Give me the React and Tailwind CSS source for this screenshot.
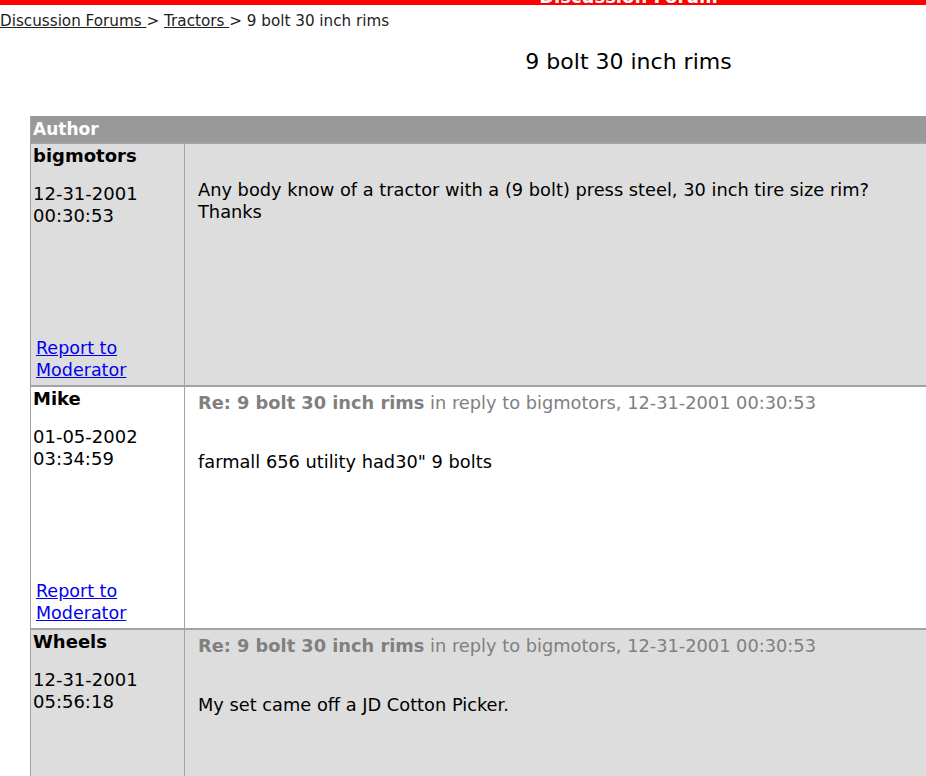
import React from 'react';

const posts = [
  {
    author: 'bigmotors',
    date: '12-31-2001',
    time: '00:30:53',
    body: ['Any body know of a tractor with a (9 bolt) press steel, 30 inch tire size rim?', 'Thanks'],
    bg: 'bg-[#dddddd]',
  },
  {
    author: 'Mike',
    date: '01-05-2002',
    time: '03:34:59',
    reply: true,
    body: ['farmall 656 utility had30" 9 bolts'],
    bg: 'bg-white',
  },
  {
    author: 'Wheels',
    date: '12-31-2001',
    time: '05:56:18',
    reply: true,
    body: ['My set came off a JD Cotton Picker.'],
    bg: 'bg-[#dddddd]',
  },
];

function PostRow({ post }) {
  return (
    <div className={`flex h-[243px] border-t-2 border-[#a3a3a3] ${post.bg}`}>
      <div className="w-[154px] shrink-0 flex flex-col justify-between border-r border-[#a3a3a3] pl-[2px] pt-[1px] pb-[4px] font-['DejaVu_Sans',sans-serif] text-[18px] leading-[22px] text-black">
        <div>
          <div className="font-bold">{post.author}</div>
          <div className="mt-[16px]">
            {post.date}
            <br />
            {post.time}
          </div>
        </div>
        <a href="#" className="pl-[3px] text-[17.5px] text-[#0000ee] underline">
          Report to
          <br />
          Moderator
        </a>
      </div>
      <div className="flex-1 pl-[13px] font-['DejaVu_Sans',sans-serif] text-[17.8px] leading-[22px]">
        {post.reply ? (
          <div className="pt-[5px] text-[#808080]">
            <span className="font-bold">Re: 9 bolt 30 inch rims</span> in reply to bigmotors, 12-31-2001 00:30:53
          </div>
        ) : null}
        <div className={post.reply ? 'mt-[37px] text-black' : 'mt-[35px] text-black'}>
          {post.body.map((line, i) => (
            <div key={i}>{line}</div>
          ))}
        </div>
      </div>
    </div>
  );
}

export default function App() {
  return (
    <div className="w-[926px] h-[776px] overflow-hidden bg-white">
      <div className="w-[1257px]">
        <div className="h-[5px] overflow-hidden bg-[#ff0000] text-center">
          <div className="-mt-[14px] font-['DejaVu_Sans',sans-serif] text-[18px] font-bold leading-[22px] text-white">
            Discussion Forum
          </div>
        </div>

        <div className="pt-[7px] font-['DejaVu_Sans',sans-serif] text-[15.2px] leading-[18px] text-[#222]">
          <a href="#" className="underline text-[#222]">Discussion Forums </a>
          {' > '}
          <a href="#" className="underline text-[#222]">Tractors </a>
          {'> 9 bolt 30 inch rims'}
        </div>

        <h1 className="mt-[19px] text-center font-['DejaVu_Sans',sans-serif] text-[22px] leading-[26px] text-black">
          9 bolt 30 inch rims
        </h1>

        <div className="ml-[30px] mt-[41px] w-[1197px] border-l border-[#a3a3a3]">
          <div className="h-[26px] bg-[#999999] pl-[2px] font-['DejaVu_Sans',sans-serif] text-[17px] font-bold leading-[26px] text-white">
            Author
          </div>
          {posts.map((p, i) => (
            <PostRow key={i} post={p} />
          ))}
        </div>
      </div>
    </div>
  );
}
